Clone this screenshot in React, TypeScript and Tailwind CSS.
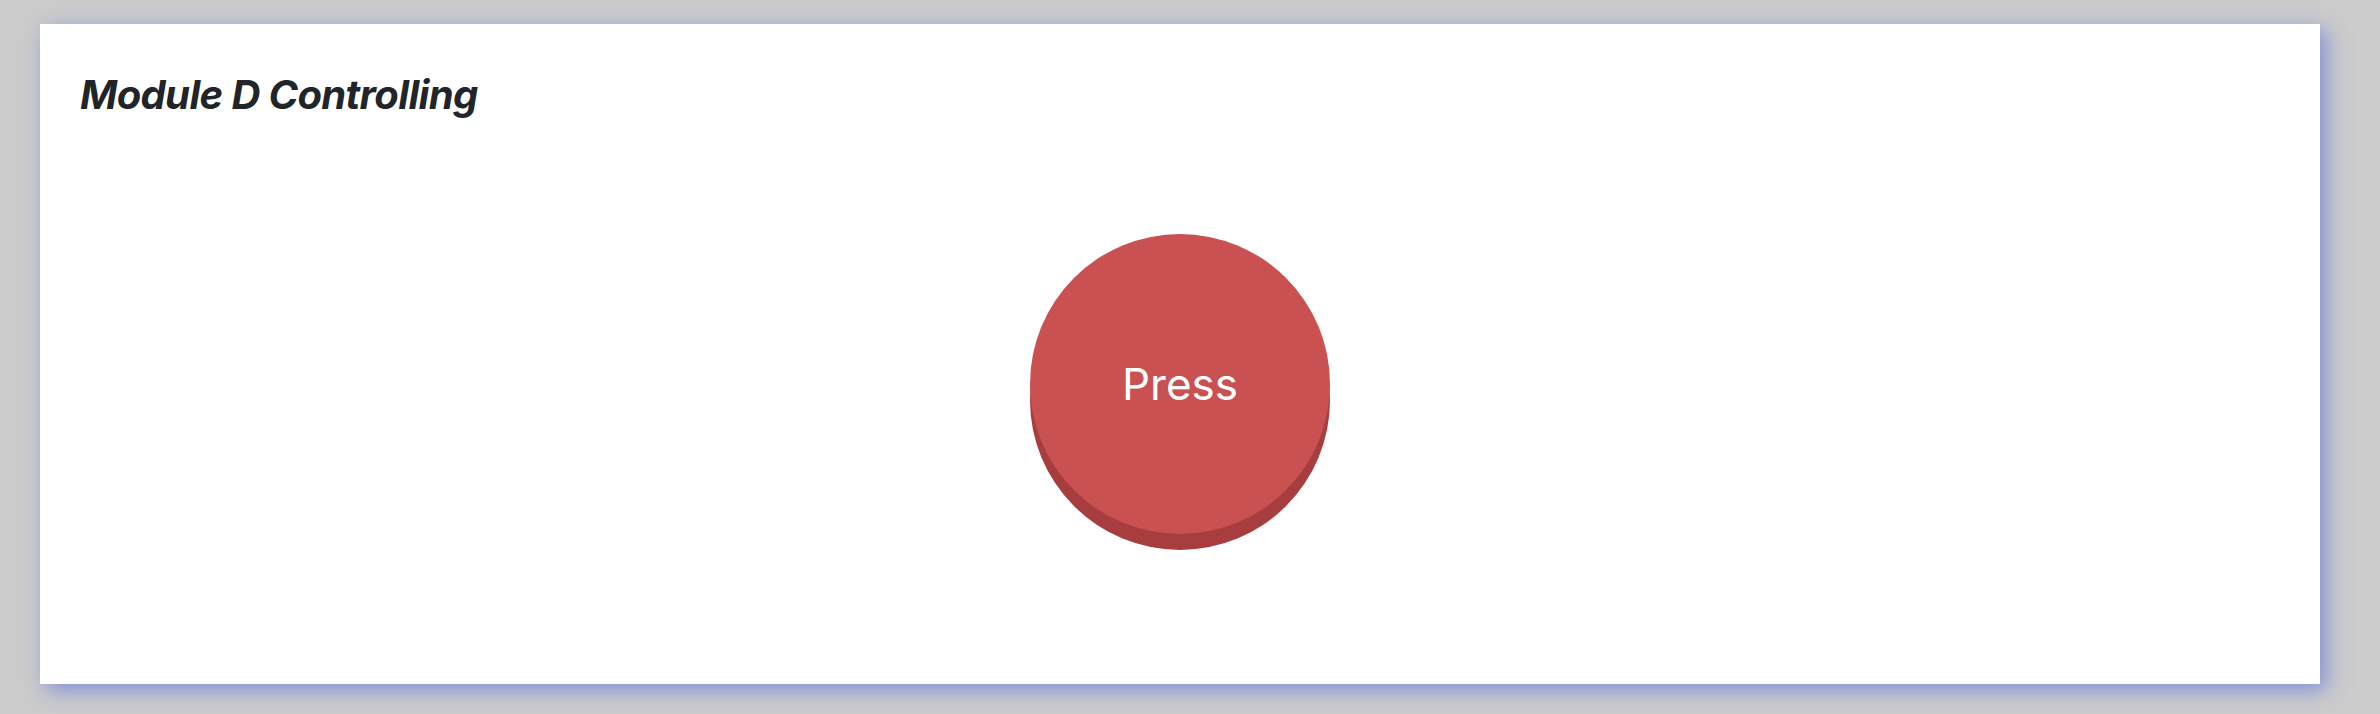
import React from "react";

export default function App() {
  return (
    <div className="min-h-[714px] w-full bg-[#cccccc] pt-[24px] pl-[40px] pr-[60px] pb-[30px]">
      <div className="h-[660px] bg-white shadow-[6px_6px_20px_rgba(70,95,220,0.55)] px-[40px] pt-[47px]">
        <h1 className="m-0 text-[40px] leading-[48px] font-bold italic tracking-[-0.016em] text-[#212529] [font-family:Inter,'Noto_Sans',sans-serif]">
          Module D Controlling
        </h1>
        <div className="mt-[115px] flex justify-center">
          <button
            type="button"
            className="flex h-[300px] w-[300px] items-center justify-center rounded-full bg-[#c95152] text-[44px] leading-none text-white shadow-[0_16px_0_#a83d3f] [font-family:Inter,'Noto_Sans',sans-serif]"
          >
            Press
          </button>
        </div>
      </div>
    </div>
  );
}
